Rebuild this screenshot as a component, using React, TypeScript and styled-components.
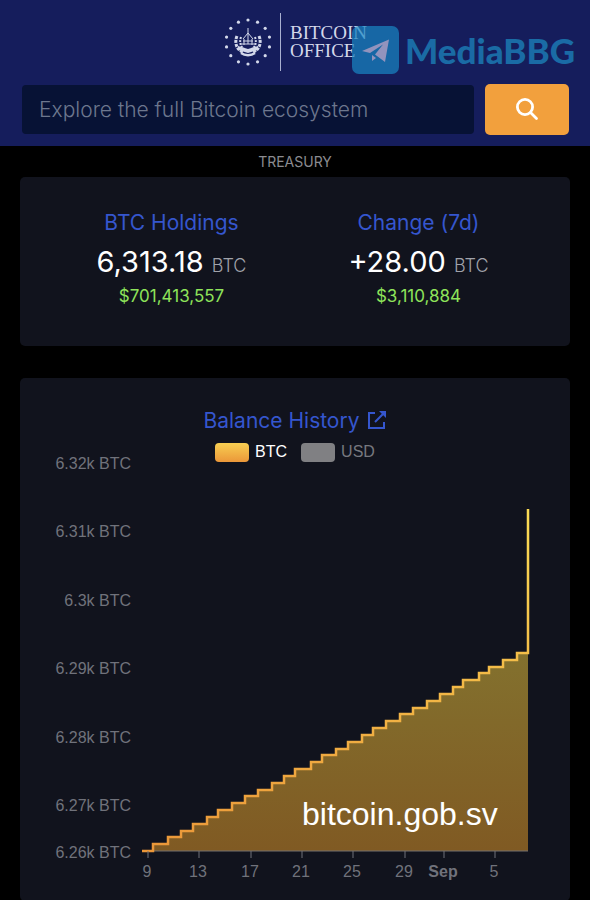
import React from 'react';
import styled, { createGlobalStyle } from 'styled-components';

const GlobalStyle = createGlobalStyle`
  * { box-sizing: border-box; }
  body {
    margin: 0;
    background: #000;
    color: #fff;
    font-family: Inter, "Liberation Sans", sans-serif;
  }
`;

const Page = styled.div`
  min-height: 100vh;
  overflow: hidden;
`;

const Header = styled.header`
  position: relative;
  background: #151d5c;
  padding: 12px 21px 11px 22px;
`;

const Brand = styled.a`
  display: flex;
  align-items: center;
  justify-content: center;
  height: 60px;
  color: #d3d8ea;
  text-decoration: none;
`;

const Emblem = styled.svg`
  width: 48px;
  height: 48px;
`;

const BrandName = styled.span`
  display: flex;
  flex-direction: column;
  margin-left: 8px;
  padding: 11px 0 11px 9px;
  border-left: 1px solid #a9b0d0;
  font: 19px/18px "Liberation Serif", serif;
`;

const Watermark = styled.div`
  position: absolute;
  top: 26px;
  right: 15px;
  display: flex;
  align-items: center;
  gap: 6px;
  color: #1a6ba5;
  font: 900 35px/48px Lato, sans-serif;
`;

const Plane = styled.svg`
  width: 47px;
  height: 48px;
`;

const Search = styled.form`
  display: flex;
  align-items: center;
  gap: 11px;
  margin-top: 12px;
`;

const SearchInput = styled.input`
  flex: 1;
  min-width: 0;
  height: 49px;
  padding: 0 17px;
  border: 0;
  border-radius: 4px;
  background: #071235;
  color: #fff;
  font: 300 21px Inter, sans-serif;
  &::placeholder { color: #6d778e; opacity: 1; }
`;

const SearchButton = styled.button`
  display: flex;
  align-items: center;
  justify-content: center;
  width: 84px;
  height: 51px;
  padding: 0;
  border: 0;
  border-radius: 5px;
  background: #f2a03d;
  color: #fff;
  svg { width: 24px; height: 24px; }
`;

const Main = styled.main`
  padding: 0 20px;
`;

const SectionTitle = styled.h1`
  margin: 0;
  padding: 7px 0 6px;
  color: #8b8b90;
  font-size: 14px;
  font-weight: 400;
  line-height: 18px;
  text-align: center;
  text-transform: uppercase;
`;

const Card = styled.section`
  border-radius: 5px;
  background: #11131d;
`;

const Stats = styled(Card)`
  display: grid;
  grid-template-columns: 1fr 1fr;
  padding: 32px 28px 36px;
  margin-bottom: 32px;
`;

const Stat = styled.div`
  text-align: center;
`;

const Heading = styled.h2`
  margin: 0;
  color: #3556ce;
  font-size: 21px;
  font-weight: 400;
  line-height: 28px;
  text-align: center;
`;

const Amount = styled.p`
  margin: 0;
  padding-top: 3px;
  font-size: 29px;
  line-height: 44px;
`;

const Unit = styled.span`
  color: #a0a2aa;
  font-size: 18px;
  font-weight: 300;
  line-height: 18px;
`;

const Fiat = styled.p`
  margin: 0;
  padding-bottom: 1px;
  color: #8ee35a;
  font-size: 17px;
  line-height: 25px;
`;

const ChartCard = styled(Card)`
  padding: 29px 0 16px;
`;

const HeadingLink = styled.a`
  display: inline-flex;
  align-items: center;
  gap: 7px;
  color: inherit;
  text-decoration: none;
  svg { width: 20px; height: 20px; }
`;

const Legend = styled.div`
  display: flex;
  justify-content: center;
  gap: 14px;
  padding: 7px 0 1px;
`;

const LegendItem = styled.button<{ $muted?: boolean }>`
  display: flex;
  align-items: center;
  gap: 6px;
  padding: 0;
  border: 0;
  background: none;
  color: ${(p) => (p.$muted ? '#77787f' : '#fff')};
  font: 16px/20px "Liberation Sans", sans-serif;
  &::before {
    content: "";
    width: 34px;
    height: 19px;
    border-radius: 4px;
    background: ${(p) => (p.$muted ? '#808083' : 'linear-gradient(#f8cf52, #eb9739)')};
  }
`;

const Chart = styled.svg`
  display: block;
  width: 100%;
  height: auto;
  overflow: visible;
  font-family: "Liberation Sans", sans-serif;
`;

const AxisText = styled.text<{ $bold?: boolean }>`
  fill: #70727b;
  font-size: 16px;
  font-weight: ${(p) => (p.$bold ? 700 : 400)};
`;

const SiteText = styled.text`
  fill: #fff;
  font-size: 32px;
`;

const BALANCES = [
  { label: '6.32k BTC', y: 7 },
  { label: '6.31k BTC', y: 75 },
  { label: '6.3k BTC', y: 144 },
  { label: '6.29k BTC', y: 212 },
  { label: '6.28k BTC', y: 281 },
  { label: '6.27k BTC', y: 349 },
  { label: '6.26k BTC', y: 396 },
];

const DATES = [
  { label: '9', x: 128 },
  { label: '13', x: 179 },
  { label: '17', x: 231 },
  { label: '21', x: 282 },
  { label: '25', x: 333 },
  { label: '29', x: 385 },
  { label: 'Sep', x: 424 },
  { label: '5', x: 475 },
];

const BASE = 389;
const STEPS = [
  133, 148, 161, 173, 187, 198, 212, 225, 238, 252, 264, 275, 291, 302, 316,
  328, 342, 353, 366, 380, 393, 407, 420, 433, 443, 459, 469, 483, 497,
];

const line = STEPS.reduce(
  (path, x, i) => `${path} H${x} V${Math.round(BASE - ((i + 1) * 198) / 29)}`,
  `M122 ${BASE}`,
);

const EMBLEM_STARS = Array.from({ length: 14 }, (_, i) => {
  const angle = ((i * 360) / 14 - 90) * (Math.PI / 180);
  return { x: 24 + 22 * Math.cos(angle), y: 24 + 22 * Math.sin(angle) };
});

export default function App() {
  return (
    <Page>
      <GlobalStyle />
      <Header>
        <Brand href="#">
          <Emblem viewBox="0 0 48 48" fill="none" stroke="currentColor" aria-hidden="true">
            {EMBLEM_STARS.map((s, i) => (
              <circle key={i} cx={s.x} cy={s.y} r="1.6" fill="currentColor" stroke="none" />
            ))}
            <path d="M13 18c-3 7 0 14 6 16M35 18c3 7 0 14-6 16" strokeWidth="3" strokeDasharray="3 1" />
            <path d="M17 19c-2 6 0 10 3 12M31 19c2 6 0 10-3 12" strokeWidth="2" strokeDasharray="2 1" />
            <path d="M24 10v7M19 21l5-6 5 6M17 26h14M19 23h10M20 21v6M24 17v9M28 21v6" strokeWidth="1" />
            <path d="M14 28l10 3 10-3v4l-10 3-10-3z" fill="currentColor" stroke="none" />
            <path d="M17 35c4 3 10 3 14 0" strokeWidth="2.4" />
          </Emblem>
          <BrandName>
            <span>BITCOIN</span>
            <span>OFFICE</span>
          </BrandName>
        </Brand>
        <Search onSubmit={(e) => e.preventDefault()}>
          <SearchInput type="search" aria-label="Search" placeholder="Explore the full Bitcoin ecosystem" />
          <SearchButton type="submit" aria-label="Search">
            <svg viewBox="0 0 24 24" fill="none" stroke="currentColor" strokeWidth="2.8" strokeLinecap="round">
              <circle cx="10" cy="9" r="7.6" />
              <path d="M15.500 14.500l6 6" />
            </svg>
          </SearchButton>
        </Search>
        <Watermark>
          <Plane viewBox="0 0 47 48" aria-hidden="true">
            <rect width="47" height="48" rx="7" fill="#1888c5" fillOpacity="0.7" />
            <path d="M10 25L37 13.500 33 36 23 28.500 31 18.500 18 27z" fill="#9293bd" />
            <path d="M20 29l4 3-4 3z" fill="#9293bd" />
          </Plane>
          MediaBBG
        </Watermark>
      </Header>
      <Main>
        <SectionTitle>Treasury</SectionTitle>
        <Stats>
          <Stat>
            <Heading>BTC Holdings</Heading>
            <Amount>6,313.18 <Unit>BTC</Unit></Amount>
            <Fiat>$701,413,557</Fiat>
          </Stat>
          <Stat>
            <Heading>Change (7d)</Heading>
            <Amount>+28.00 <Unit>BTC</Unit></Amount>
            <Fiat>$3,110,884</Fiat>
          </Stat>
        </Stats>
        <ChartCard>
          <Heading>
            <HeadingLink href="#">
              Balance History
              <svg viewBox="0 0 20 20" fill="none" stroke="currentColor" strokeWidth="2" aria-hidden="true">
                <path d="M8 2H2v15h15v-6M8 11L17 2" />
                <path d="M12 0h7v7z" fill="currentColor" stroke="none" />
              </svg>
            </HeadingLink>
          </Heading>
          <Legend>
            <LegendItem type="button">BTC</LegendItem>
            <LegendItem type="button" $muted>USD</LegendItem>
          </Legend>
          <Chart viewBox="0 1 550 422" role="img" aria-label="Balance history">
            <defs>
              <linearGradient id="lineFill" gradientUnits="userSpaceOnUse" x1="0" y1="47" x2="0" y2="389">
                <stop offset="0" stopColor="#fbdc55" />
                <stop offset="1" stopColor="#eb9739" />
              </linearGradient>
              <linearGradient id="areaFill" gradientUnits="userSpaceOnUse" x1="0" y1="191" x2="0" y2="389">
                <stop offset="0" stopColor="#83712e" />
                <stop offset="1" stopColor="#805a23" />
              </linearGradient>
            </defs>
            {BALANCES.map((b) => (
              <AxisText key={b.label} x="111" y={b.y} textAnchor="end">{b.label}</AxisText>
            ))}
            <path d={`${line} H508 V${BASE} Z`} fill="url(#areaFill)" />
            <path d={`M122 ${BASE}H508`} stroke="#74716f" />
            <path d={`${line} H508 V47`} fill="none" stroke="url(#lineFill)" strokeWidth="2.5" />
            {DATES.map((d) => (
              <React.Fragment key={d.label}>
                <path d={`M${d.x} ${BASE}v7`} stroke="#70727b" />
                <AxisText x={d.x - 1} y="415" textAnchor="middle" $bold={d.label === 'Sep'}>{d.label}</AxisText>
              </React.Fragment>
            ))}
            <SiteText x="282" y="363">bitcoin.gob.sv</SiteText>
          </Chart>
        </ChartCard>
      </Main>
    </Page>
  );
}
